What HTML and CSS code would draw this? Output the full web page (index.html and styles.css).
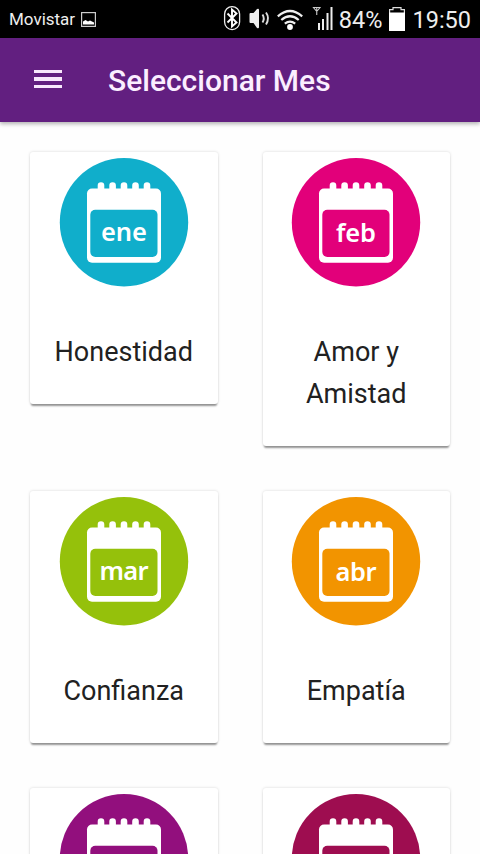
FILE: index.html
```html
<!DOCTYPE html>
<html lang="es">
<head>
    <meta charset="UTF-8">
    <meta name="viewport" content="width=device-width, initial-scale=1.0">
    <title>Seleccionar Mes</title>
    <link rel="stylesheet" href="styles.css">
</head>
<body>
    <div class="status-bar">
        <span class="carrier">Movistar</span>
        <svg class="picture-icon" width="15" height="15" viewBox="0 0 15 15">
            <rect x="0.6" y="0.6" width="13.8" height="13.8" fill="none" stroke="#ccc" stroke-width="1.2"/>
            <path d="M2 12.5V9.5l2.500-1.500 2.500 1.500 2-1 4 2v2z" fill="#fff"/>
        </svg>
        <!-- bluetooth, sound, wifi and signal -->
        <svg class="status-icons" width="110" height="28" viewBox="0 0 110 28">
            <rect x="1.6" y="1.6" width="15" height="23" rx="7.5" fill="none" stroke="#eee" stroke-width="1.3"/>
            <path d="M4.500 8.500l9 9-4.500 4V4.500l4.500 4-9 9" fill="none" stroke="#fff" stroke-width="1.900"/>
            <path d="M26.500 9q0-1 1-1h3L34 4q2-1 2 1v17q0 2-2 1l-3.500-5h-3q-1 0-1-1z" fill="#eee"/>
            <path d="M39.500 9.500q2.500 4 0 8M43 7.500q4 5.500 0 12" fill="none" stroke="#ddd" stroke-width="1.900"/>
            <path d="M54.800 11.300q12.200-10.600 24.400 0M58.300 15q8.700-7.500 17.400 0M61.800 18.700q5.200-4 10.400 0" fill="none" stroke="#eee" stroke-width="2.200"/>
            <circle cx="67" cy="22" r="2.900" fill="#fff"/>
            <path d="M90.500 2.500h6.500l-3.250 4zM93.750 3v7" fill="none" stroke="#ccc" stroke-width="1.100"/>
            <path d="M95 18h2v7h-2zM99 14h2v11h-2zM103.500 8h2v17h-2zM107.500 2h2v23h-2z" fill="#eee"/>
        </svg>
        <span class="battery-level">84%</span>
        <svg class="battery-icon" width="16" height="24" viewBox="0 0 16 24">
            <path d="M0.600 6V2.600h3.400V0.600h8v2h3.400V6" fill="none" stroke="#ddd" stroke-width="1.200"/>
            <path d="M0 5.500h16V24H0z" fill="#fff"/>
        </svg>
        <span class="clock">19:50</span>
    </div>

    <header class="toolbar">
        <div class="menu-btn">
            <span></span>
            <span></span>
            <span></span>
        </div>
        <h1>Seleccionar Mes</h1>
    </header>

    <!-- calendar parts shared by all the months -->
    <svg class="defs" width="0" height="0">
        <symbol id="calendar" viewBox="0 0 130 130">
            <circle cx="65" cy="65.300" r="64.200"/>
            <rect x="28" y="31.500" width="74" height="74.200" rx="5" fill="#fff"/>
            <path d="M42 28.500v7M53.600 28.500v7M65 28.500v7M76.500 28.500v7M88 28.500v7" stroke="#fff" stroke-width="6.600" stroke-linecap="round"/>
            <rect x="31.300" y="52.800" width="67.200" height="47.200" rx="5"/>
        </symbol>
    </svg>

    <main class="months">
        <div class="card">
            <svg class="month-icon ene" viewBox="0 0 130 130">
                <use href="#calendar"/>
                <text x="65" y="84" textLength="46">ene</text>
            </svg>
            <h2>Honestidad</h2>
        </div>
        <div class="card">
            <svg class="month-icon feb" viewBox="0 0 130 130">
                <use href="#calendar"/>
                <text x="65" y="85" textLength="40">feb</text>
            </svg>
            <h2>Amor y Amistad</h2>
        </div>
        <div class="card">
            <svg class="month-icon mar" viewBox="0 0 130 130">
                <use href="#calendar"/>
                <text x="65" y="84" textLength="49">mar</text>
            </svg>
            <h2>Confianza</h2>
        </div>
        <div class="card">
            <svg class="month-icon abr" viewBox="0 0 130 130">
                <use href="#calendar"/>
                <text x="65" y="85" textLength="41">abr</text>
            </svg>
            <h2>Empatía</h2>
        </div>
        <div class="card">
            <svg class="month-icon may" viewBox="0 0 130 130">
                <use href="#calendar"/>
            </svg>
        </div>
        <div class="card">
            <svg class="month-icon jun" viewBox="0 0 130 130">
                <use href="#calendar"/>
            </svg>
        </div>
    </main>
</body>
</html>
```

FILE: styles.css
```css
* {
    box-sizing: border-box;
}

body {
    margin: 0;
    height: 854px;
    overflow: hidden;
    background-color: #fefefe;
    font-family: Roboto, sans-serif;
}

.status-bar {
    display: flex;
    align-items: center;
    height: 38px;
    padding: 0 9px;
    background-color: #000;
    color: #eee;
}

.carrier {
    width: 66px;
    font-size: 17px;
}

.picture-icon {
    margin-left: 6px;
}

.status-icons {
    margin: 0 6px 0 auto;
}

.battery-level,
.clock {
    font-size: 23.5px;
    line-height: 38px;
    padding-top: 2px;
}

.battery-icon {
    margin: 0 7px;
}

.toolbar {
    display: flex;
    align-items: center;
    height: 84px;
    padding-left: 34px;
    background-color: #621f80;
    box-shadow: 0 2px 4px rgba(0, 0, 0, 0.3);
}

.menu-btn {
    display: flex;
    flex-direction: column;
    gap: 4px;
    width: 28px;
    margin-right: 46px;
    padding-bottom: 2px;
}

.menu-btn span {
    height: 3.5px;
    background-color: #f8e8fc;
}

h1 {
    margin: 0;
    color: #fbeeff;
    font-size: 30px;
    font-weight: 500;
}

.defs {
    display: block;
}

.months {
    display: grid;
    grid-template-columns: 1fr 1fr;
    align-items: start;
    gap: 45px;
    padding: 30px 30px 0;
}

.card {
    padding: 5px 20px 31px;
    background-color: #fff;
    border-radius: 3px;
    box-shadow: 0 3px 2px -1px rgba(0, 0, 0, 0.4), 0 0 3px rgba(0, 0, 0, 0.16);
    text-align: center;
}

.month-icon {
    display: block;
    width: 130px;
    height: 130px;
    margin: 0 auto 44px;
}

.month-icon text {
    fill: #fff;
    font-family: "Noto Sans", sans-serif;
    font-size: 25.5px;
    font-weight: 600;
    text-anchor: middle;
}

h2 {
    margin: 0;
    color: #212121;
    font-size: 27px;
    font-weight: 400;
    line-height: 42px;
}

.ene {
    fill: #10aecb;
}

.feb {
    fill: #e2007a;
}

.mar {
    fill: #95c10b;
}

.abr {
    fill: #f29400;
}

.may {
    fill: #920f7d;
}

.jun {
    fill: #9e0d50;
}
```
